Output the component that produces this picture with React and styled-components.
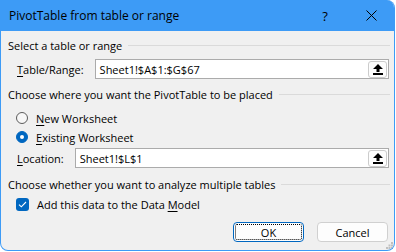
import React from 'react';
import styled, { createGlobalStyle } from 'styled-components';

const BLUE = '#3d9bf6';
const ACCENT = '#0067c0';

const Global = createGlobalStyle`
  html, body { margin: 0; padding: 0; background: #ffffff; }
  body { font-family: "Open Sans", "Noto Sans", sans-serif; }
`;

const Window = styled.div`
  position: relative;
  box-sizing: border-box;
  width: 395px;
  height: 251px;
  border: 1px solid ${BLUE};
  border-top: none;
  border-radius: 0 8px 8px 8px;
  background: #f0f0f0;
  overflow: hidden;
  display: flex;
  flex-direction: column;
  font-family: "Open Sans", sans-serif;
  font-size: 11px;
  color: #000;
`;

const TitleBar = styled.div`
  flex: none;
  height: 31px;
  background: ${BLUE};
  display: flex;
  align-items: center;
  padding-left: 8px;
`;

const Title = styled.div`
  flex: 1;
  font-size: 12px;
  color: #000;
`;

const TitleButton = styled.div`
  width: 46px;
  height: 31px;
  display: flex;
  align-items: center;
  justify-content: center;
  font-size: 13px;
`;

const Body = styled.div`
  flex: 1;
  display: flex;
  flex-direction: column;
  padding: 6px 4px 0 7px;
`;

const SectionHeader = styled.div`
  display: flex;
  align-items: center;
  gap: 6px;
  height: 16px;
  margin-top: ${p => p.$mt || 0}px;
  white-space: nowrap;
  &::after {
    content: '';
    flex: 1;
    height: 1px;
    background: #dadada;
  }
`;

const FieldRow = styled.div`
  display: flex;
  align-items: center;
  height: 20px;
  padding-left: 9px;
  margin-top: ${p => p.$mt || 0}px;
  margin-right: 1px;
`;

const Label = styled.span`
  margin-right: 11px;
  white-space: nowrap;
`;

const Key = styled.span`
  text-decoration: underline;
  text-underline-offset: 2px;
`;

const Input = styled.div`
  flex: 1;
  box-sizing: border-box;
  height: 20px;
  display: flex;
  align-items: center;
  background: #fff;
  border: 1px solid #ababab;
  padding-left: 4px;
`;

const InputValue = styled.span`
  flex: 1;
`;

const RefButton = styled.div`
  box-sizing: border-box;
  width: 19px;
  height: 17px;
  margin-right: 1px;
  border: 1px solid #cccccc;
  border-radius: 3px;
  background: #fdfdfd;
  display: flex;
  align-items: center;
  justify-content: center;
`;

const OptionRow = styled.div`
  display: flex;
  align-items: center;
  height: 18px;
  padding-left: 8px;
  margin-top: ${p => p.$mt || 0}px;
  gap: 8px;
`;

const Radio = styled.span`
  box-sizing: border-box;
  width: 12px;
  height: 12px;
  border-radius: 50%;
  flex: none;
  display: flex;
  align-items: center;
  justify-content: center;
  background: ${p => (p.$checked ? ACCENT : '#f7f7f7')};
  border: 1px solid ${p => (p.$checked ? ACCENT : '#5c5c5c')};
  &::after {
    content: '';
    display: ${p => (p.$checked ? 'block' : 'none')};
    width: 4px;
    height: 4px;
    border-radius: 50%;
    background: #fff;
  }
`;

const Checkbox = styled.span`
  box-sizing: border-box;
  width: 13px;
  height: 13px;
  border-radius: 3px;
  flex: none;
  background: ${ACCENT};
  display: flex;
  align-items: center;
  justify-content: center;
`;

const ButtonRow = styled.div`
  display: flex;
  justify-content: flex-end;
  gap: 13px;
  margin-top: ${p => p.$mt || 0}px;
  margin-right: 2px;
`;

const Button = styled.div`
  position: relative;
  box-sizing: border-box;
  width: 71px;
  height: 20px;
  display: flex;
  align-items: center;
  justify-content: center;
  background: #fdfdfd;
  border: 1px solid ${p => (p.$focused ? ACCENT : '#d0d0d0')};
  border-radius: 4px;
  &::after {
    content: '';
    display: ${p => (p.$focused ? 'block' : 'none')};
    position: absolute;
    inset: 1px;
    border: 1px dotted #000;
    border-radius: 2px;
  }
`;

const Grip = styled.svg`
  position: absolute;
  right: 1px;
  bottom: 1px;
`;

const UpIcon = () => (
  <svg width="10" height="11" viewBox="0 0 10 11">
    <path d="M5 0 L10 5 H6.5 V8 H3.5 V5 H0 Z" fill="#000" />
    <rect x="0" y="9" width="10" height="2" fill="#000" />
  </svg>
);

const CloseIcon = () => (
  <svg width="11" height="11" viewBox="0 0 11 11">
    <path d="M0.5 0.5 L10.5 10.5 M10.5 0.5 L0.5 10.5" stroke="#000" strokeWidth="1" />
  </svg>
);

const CheckIcon = () => (
  <svg width="9" height="7" viewBox="0 0 9 7">
    <path d="M1 3.6 L3.3 5.8 L8 1" stroke="#fff" strokeWidth="1.1" fill="none" />
  </svg>
);

export default function App() {
  return (
    <>
      <Global />
      <Window>
        <TitleBar>
          <Title>PivotTable from table or range</Title>
          <TitleButton>?</TitleButton>
          <TitleButton><CloseIcon /></TitleButton>
        </TitleBar>
        <Body>
          <SectionHeader>Select a table or range</SectionHeader>
          <FieldRow $mt={6}>
            <Label><Key>T</Key>able/Range:</Label>
            <Input>
              <InputValue>Sheet1!$A$1:$G$67</InputValue>
              <RefButton><UpIcon /></RefButton>
            </Input>
          </FieldRow>
          <SectionHeader $mt={7}>Choose where you want the PivotTable to be placed</SectionHeader>
          <OptionRow $mt={7}>
            <Radio />
            <span><Key>N</Key>ew Worksheet</span>
          </OptionRow>
          <OptionRow $mt={1}>
            <Radio $checked />
            <span><Key>E</Key>xisting Worksheet</span>
          </OptionRow>
          <FieldRow $mt={2}>
            <Label><Key>L</Key>ocation:</Label>
            <Input>
              <InputValue>Sheet1!$L$1</InputValue>
              <RefButton><UpIcon /></RefButton>
            </Input>
          </FieldRow>
          <SectionHeader $mt={8}>Choose whether you want to analyze multiple tables</SectionHeader>
          <OptionRow $mt={3}>
            <Checkbox><CheckIcon /></Checkbox>
            <span>Add this data to the Data <Key>M</Key>odel</span>
          </OptionRow>
          <ButtonRow $mt={9}>
            <Button $focused>OK</Button>
            <Button>Cancel</Button>
          </ButtonRow>
        </Body>
        <Grip width="7" height="7" viewBox="0 0 7 7">
          <rect x="5" y="0" width="2" height="2" fill="#c0c0c0" />
          <rect x="2.5" y="2.5" width="2" height="2" fill="#c0c0c0" />
          <rect x="5" y="2.5" width="2" height="2" fill="#c0c0c0" />
          <rect x="0" y="5" width="2" height="2" fill="#c0c0c0" />
          <rect x="2.5" y="5" width="2" height="2" fill="#c0c0c0" />
          <rect x="5" y="5" width="2" height="2" fill="#c0c0c0" />
        </Grip>
      </Window>
    </>
  );
}
